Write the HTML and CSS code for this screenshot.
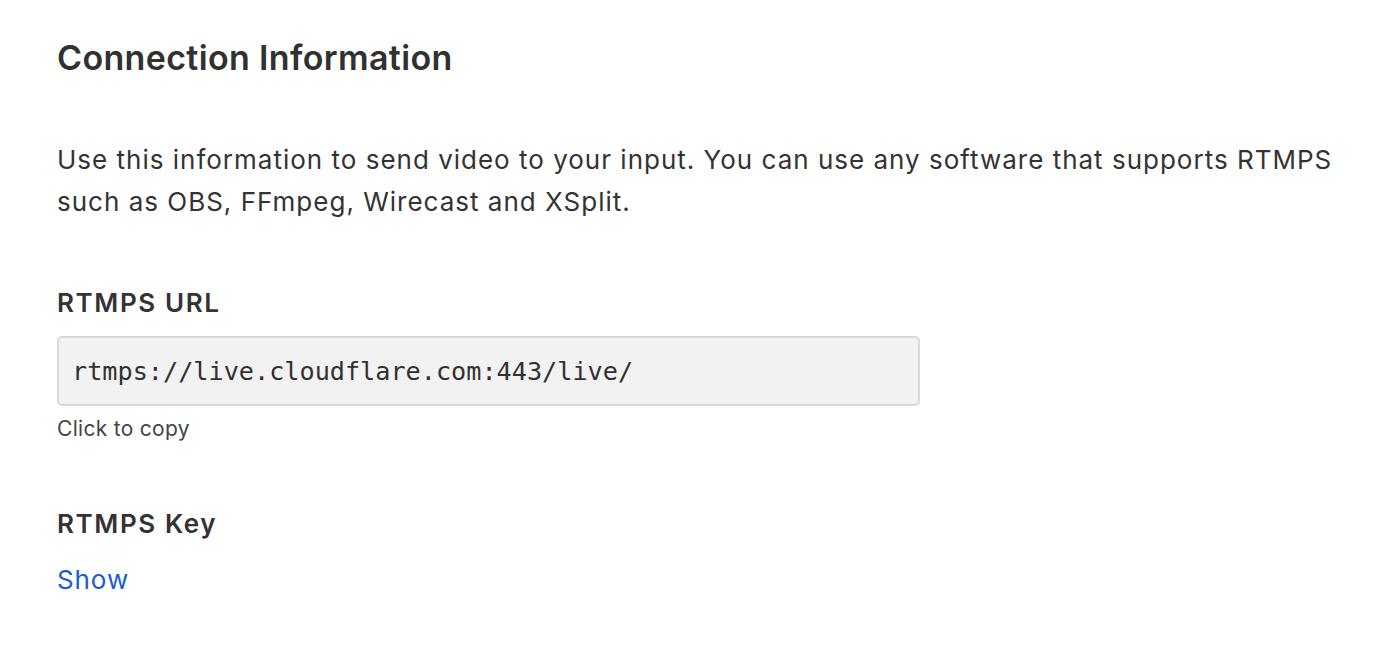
FILE: index.html
```html
<!DOCTYPE html>
<html>
<head>
<meta charset="utf-8">
<link rel="stylesheet" href="styles.css">
</head>
<body>
<main class="panel">
  <h1 class="title">Connection Information</h1>
  <p class="intro">Use this information to send video to your input. You can use any software that supports RTMPS such as OBS, FFmpeg, Wirecast and XSplit.</p>
  <section class="field">
    <h2 class="label">RTMPS URL</h2>
    <div class="copybox">rtmps://live.cloudflare.com:443/live/</div>
    <div class="hint">Click to copy</div>
  </section>
  <section class="field">
    <h2 class="label">RTMPS Key</h2>
    <a class="show" href="#">Show</a>
  </section>
</main>
</body>
</html>
```

FILE: styles.css
```css
html, body {
  margin: 0;
  padding: 0;
  background: #ffffff;
}
body {
  font-family: Inter, "Noto Sans", sans-serif;
  color: #333333;
}
.panel {
  padding: 36px 57px 0 57px;
  display: flex;
  flex-direction: column;
}
.title {
  margin: 0;
  font-size: 34px;
  line-height: 44px;
  font-weight: 600;
  letter-spacing: 0.35px;
  color: #313131;
}
.intro {
  margin: 59px 0 0 0;
  width: 1300px;
  font-size: 26px;
  line-height: 42px;
  letter-spacing: 1px;
  color: #333333;
}
.field {
  display: flex;
  flex-direction: column;
  align-items: flex-start;
}
.label {
  margin: 0;
  font-size: 26px;
  font-weight: 600;
  line-height: 34px;
  letter-spacing: 1.6px;
  color: #333333;
}
.field:first-of-type .label { margin-top: 63px; }
.copybox {
  margin-top: 16px;
  box-sizing: border-box;
  width: 863px;
  height: 70px;
  padding: 0 13px;
  display: flex;
  align-items: center;
  background: #f2f2f2;
  border: 2px solid #d9d9d9;
  border-radius: 5px;
  font-family: "DejaVu Sans Mono", "Liberation Mono", monospace;
  font-size: 25.2px;
  color: #313131;
}
.hint {
  margin-top: 9px;
  font-size: 21px;
  line-height: 28px;
  letter-spacing: 0.3px;
  color: #444444;
}
.field + .field .label { margin-top: 64px; }
.show {
  margin-top: 22px;
  font-size: 26px;
  line-height: 34px;
  letter-spacing: 0.9px;
  color: #1d5dc9;
  text-decoration: none;
}
```
